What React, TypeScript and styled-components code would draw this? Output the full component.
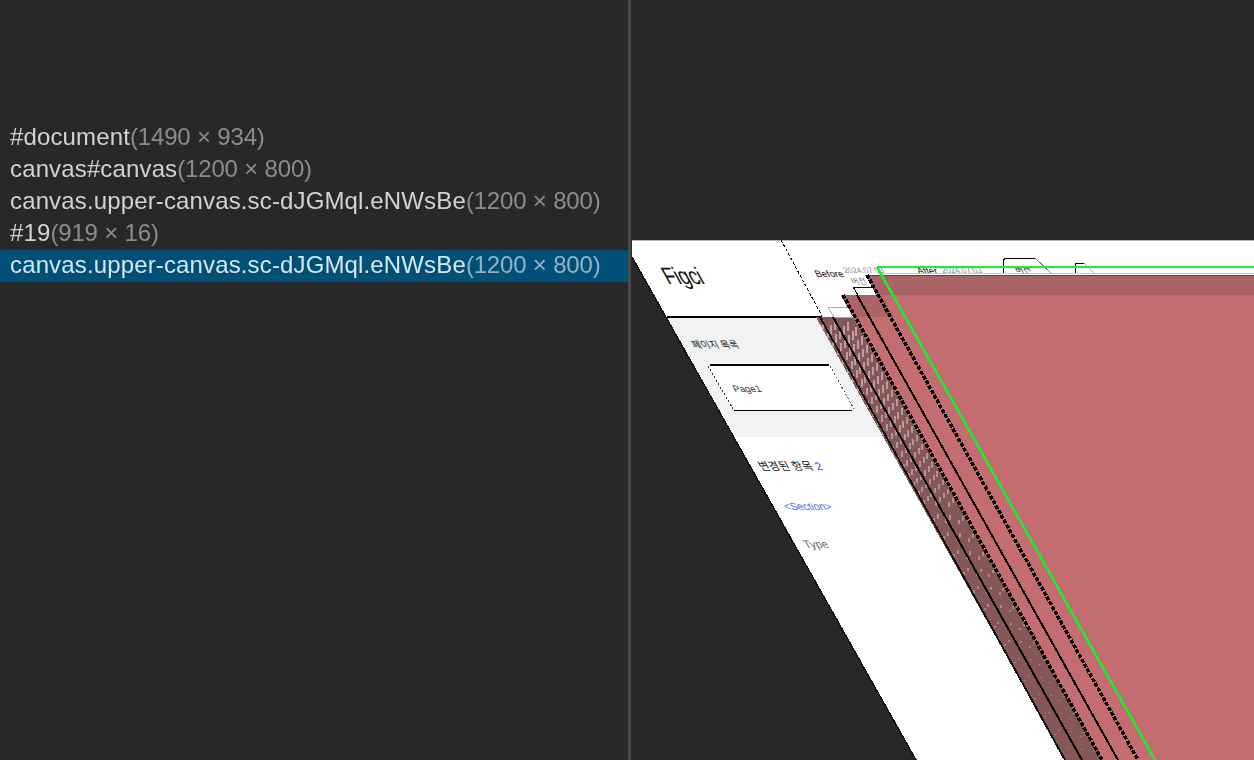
import styled, { createGlobalStyle } from "styled-components";

const SLOPE = 0.5625;

const GlobalStyle = createGlobalStyle`
  html, body {
    margin: 0;
    height: 100%;
    background: #282828;
    overflow: hidden;
  }
`;

const Page = styled.div`
  display: flex;
  width: 1254px;
  height: 760px;
  background: #282828;
  font-family: "Liberation Sans", Arial, sans-serif;
`;

const TreePanel = styled.div`
  width: 628px;
  flex: none;
  padding-top: 122px;
  box-sizing: border-box;
  display: flex;
  flex-direction: column;
`;

const Divider = styled.div`
  width: 3px;
  flex: none;
  background: #4a4a4a;
`;

const ViewPane = styled.div`
  flex: 1;
  padding: 240px 0 0 1px;
  box-sizing: border-box;
  display: flex;
`;

const Row = styled.div<{ $selected?: boolean }>`
  height: 32px;
  line-height: 30px;
  padding-left: 10px;
  font-size: 24px;
  letter-spacing: 0.14px;
  white-space: nowrap;
  color: ${(props) => (props.$selected ? "#d3e8f2" : "#d2d2d2")};
  background: ${(props) => (props.$selected ? "#004f76" : "transparent")};
`;

const Label = styled.span`
  display: inline-block;
  filter: blur(0.4px);
`;

const Size = styled.span<{ $selected?: boolean }>`
  display: inline-block;
  filter: blur(0.4px);
  letter-spacing: -0.18px;
  color: ${(props) => (props.$selected ? "#8fb4c8" : "#8c8c8c")};
`;

const Scene = styled.svg`
  display: block;
  width: 622px;
  height: 520px;
`;

const rows = [
  { name: "#document", size: "(1490 × 934)" },
  { name: "canvas#canvas", size: "(1200 × 800)" },
  { name: "canvas.upper-canvas.sc-dJGMql.eNWsBe", size: "(1200 × 800)" },
  { name: "#19", size: "(919 × 16)" },
  { name: "canvas.upper-canvas.sc-dJGMql.eNWsBe", size: "(1200 × 800)", selected: true },
];

// x of a sheared edge at height y, given its x at the bottom of the window
const edge = (xAtBottom: number, y: number) => xAtBottom - (760 - y) * SLOPE;

// a band between two sheared edges, from yTop down to the window bottom
const band = (left: number, right: number, yTop: number) =>
  [
    `${edge(left, yTop)},${yTop}`,
    `${edge(right, yTop)},${yTop}`,
    `${right},760`,
    `${left},760`,
  ].join(" ");

// 압축된 그리드가 점처럼 보이는 부분
const speckles = Array.from({ length: 48 }, (_, r) =>
  Array.from({ length: 6 }, (_, lane) => {
    const y = 320 + r * 9 + ((lane * 5) % 9);
    const fade = (y - 320) / 440;
    return {
      x: edge(1069 + lane * 6, y),
      y,
      h: Math.max(1, Math.round(9 - fade * 10)),
      o: 0.55 - fade * 0.3,
      show: (r + lane) % 2 === 0 || fade < 0.4,
    };
  })
)
  .flat()
  .filter((s) => s.show);

function SheetStack() {
  return (
    <g shapeRendering="crispEdges">
      {/* 뒤쪽 시트 */}
      <polygon points={band(1065, 1102, 317)} fill="#855757" />
      {speckles.map((s, i) => (
        <rect key={i} x={s.x} y={s.y} width={2} height={s.h} fill="#f0dcdc" opacity={s.o} />
      ))}
      <polygon points="828,307 851,307 857,317 834,317" fill="#fff" stroke="#aaa" />
      <polygon points="853,287 873,287 878,295 858,295" fill="#fff" stroke="#111" />
      <polygon points={band(1102, 1600, 295)} fill="#c46d70" />
      <polygon points={band(1138, 1700, 275)} fill="#c46d70" />
      <polygon points="867,276 1254,276 1254,286 873,286" fill="#ab6466" />
      <polygon points="873,286 1254,286 1254,295 878,295" fill="#a66264" />
      <polygon points="843,295 882,295 894,317 855,317" fill="#ab6466" />
      <line x1={867} y1={275.5} x2={1254} y2={275.5} stroke="#6a3c3c" strokeWidth={1.5} />
      <line x1={878} y1={273.5} x2={1254} y2={273.5} stroke="#c8c8c8" strokeWidth={1.5} />

      {/* 시트 경계선 */}
      <line x1={820} y1={317} x2={1065} y2={760} stroke="#111" strokeWidth={2} />
      <line x1={833} y1={317} x2={1082} y2={760} stroke="#000" strokeWidth={2} />
      <line x1={843} y1={295} x2={1102} y2={760} stroke="#000" strokeWidth={3.5} strokeDasharray="4 1.5" />
      <line x1={857} y1={295} x2={1118} y2={760} stroke="#000" strokeWidth={2} />
      <line x1={867} y1={275} x2={1138} y2={760} stroke="#000" strokeWidth={3.5} strokeDasharray="4 1.5" />

      {/* 선택 표시 */}
      <line x1={877} y1={267} x2={1254} y2={267} stroke="#16f02f" strokeWidth={2} />
      <line x1={877} y1={267} x2={1155} y2={760} stroke="#16f02f" strokeWidth={2.5} />
    </g>
  );
}

function PagePreview() {
  return (
    <g>
      <g shapeRendering="crispEdges">
        <polygon points="632,240 1254,240 1254,760 916,760 632,257" fill="#fff" />
        <line x1={632} y1={240.5} x2={1254} y2={240.5} stroke="#b5b5b5" />
        <polygon points="667,317 820,317 887,437 735,437" fill="#f1f2f4" />
        <line x1={667} y1={316.5} x2={822} y2={316.5} stroke="#000" strokeWidth={2} />
        <line x1={632} y1={257} x2={916} y2={760} stroke="#111" strokeWidth={1.5} />
        <line x1={781} y1={240} x2={822} y2={316} stroke="#000" strokeDasharray="3 2" />
        {/* 페이지 선택 */}
        <path d="M708 365 H830 L854 410 H733 Z" fill="#fff" />
        <line x1={710} y1={365} x2={829} y2={365} stroke="#000" strokeWidth={1.5} />
        <line x1={734} y1={410.5} x2={852} y2={410.5} stroke="#000" strokeWidth={1.5} />
        <line x1={708} y1={366} x2={733} y2={409} stroke="#333" strokeDasharray="2 2" />
        <line x1={830} y1={366} x2={854} y2={409} stroke="#555" strokeDasharray="2 2" />
        {/* 헤더 버튼 */}
        <path d="M1003 274 V262 Q1003 258 1008 258 H1035" fill="none" stroke="#000" />
        <line x1={1035} y1={258} x2={1052} y2={274} stroke="#888" />
        <path d="M1075 274 V263 H1084" fill="none" stroke="#000" />
        <line x1={1084} y1={263} x2={1095} y2={274} stroke="#aaa" />
      </g>
      <g fontFamily={'"Liberation Sans", "Noto Sans CJK KR", sans-serif'}>
        <text transform="translate(668 284) skewX(29) scale(1 1.25)" fontSize={19} letterSpacing={-0.5} fill="#111">Figci</text>
        <text transform="translate(694 348) skewX(29)" fontSize={9.5} fill="#222">페이지 목록</text>
        <text transform="translate(735 392) skewX(29)" fontSize={9.5} fill="#333">Page1</text>
        <text transform="translate(761 470) skewX(29)" fontSize={11} fill="#111">
          변경된 항목 <tspan fill="#1f4ff0">2</tspan>
        </text>
        <text transform="translate(786 510) skewX(29)" fontSize={10.5} fill="#4f6cf0">&lt;Section&gt;</text>
        <text transform="translate(806 548) skewX(29)" fontSize={11} fill="#666">Type</text>
        <text transform="translate(817 277) skewX(29)" fontSize={9.5} fill="#111">Before</text>
        <text transform="translate(845 273) skewX(29)" fontSize={8} fill="#888">2024.07.03</text>
        <text transform="translate(853 284) skewX(29)" fontSize={8} fill="#777">버전</text>
        <text transform="translate(919 274) skewX(29)" fontSize={9.5} fill="#111">After</text>
        <text transform="translate(943 273) skewX(29)" fontSize={8} fill="#888">2024.07.03</text>
        <text transform="translate(1017 273) skewX(29)" fontSize={8.5} fill="#222">버전</text>
      </g>
    </g>
  );
}

export default function App() {
  return (
    <Page>
      <GlobalStyle />
      <TreePanel>
        {rows.map((row, i) => (
          <Row key={i} $selected={row.selected}>
            <Label>{row.name}</Label>
            <Size $selected={row.selected}>{row.size}</Size>
          </Row>
        ))}
      </TreePanel>
      <Divider />
      <ViewPane>
        <Scene viewBox="632 240 622 520">
          <PagePreview />
          <SheetStack />
        </Scene>
      </ViewPane>
    </Page>
  );
}
